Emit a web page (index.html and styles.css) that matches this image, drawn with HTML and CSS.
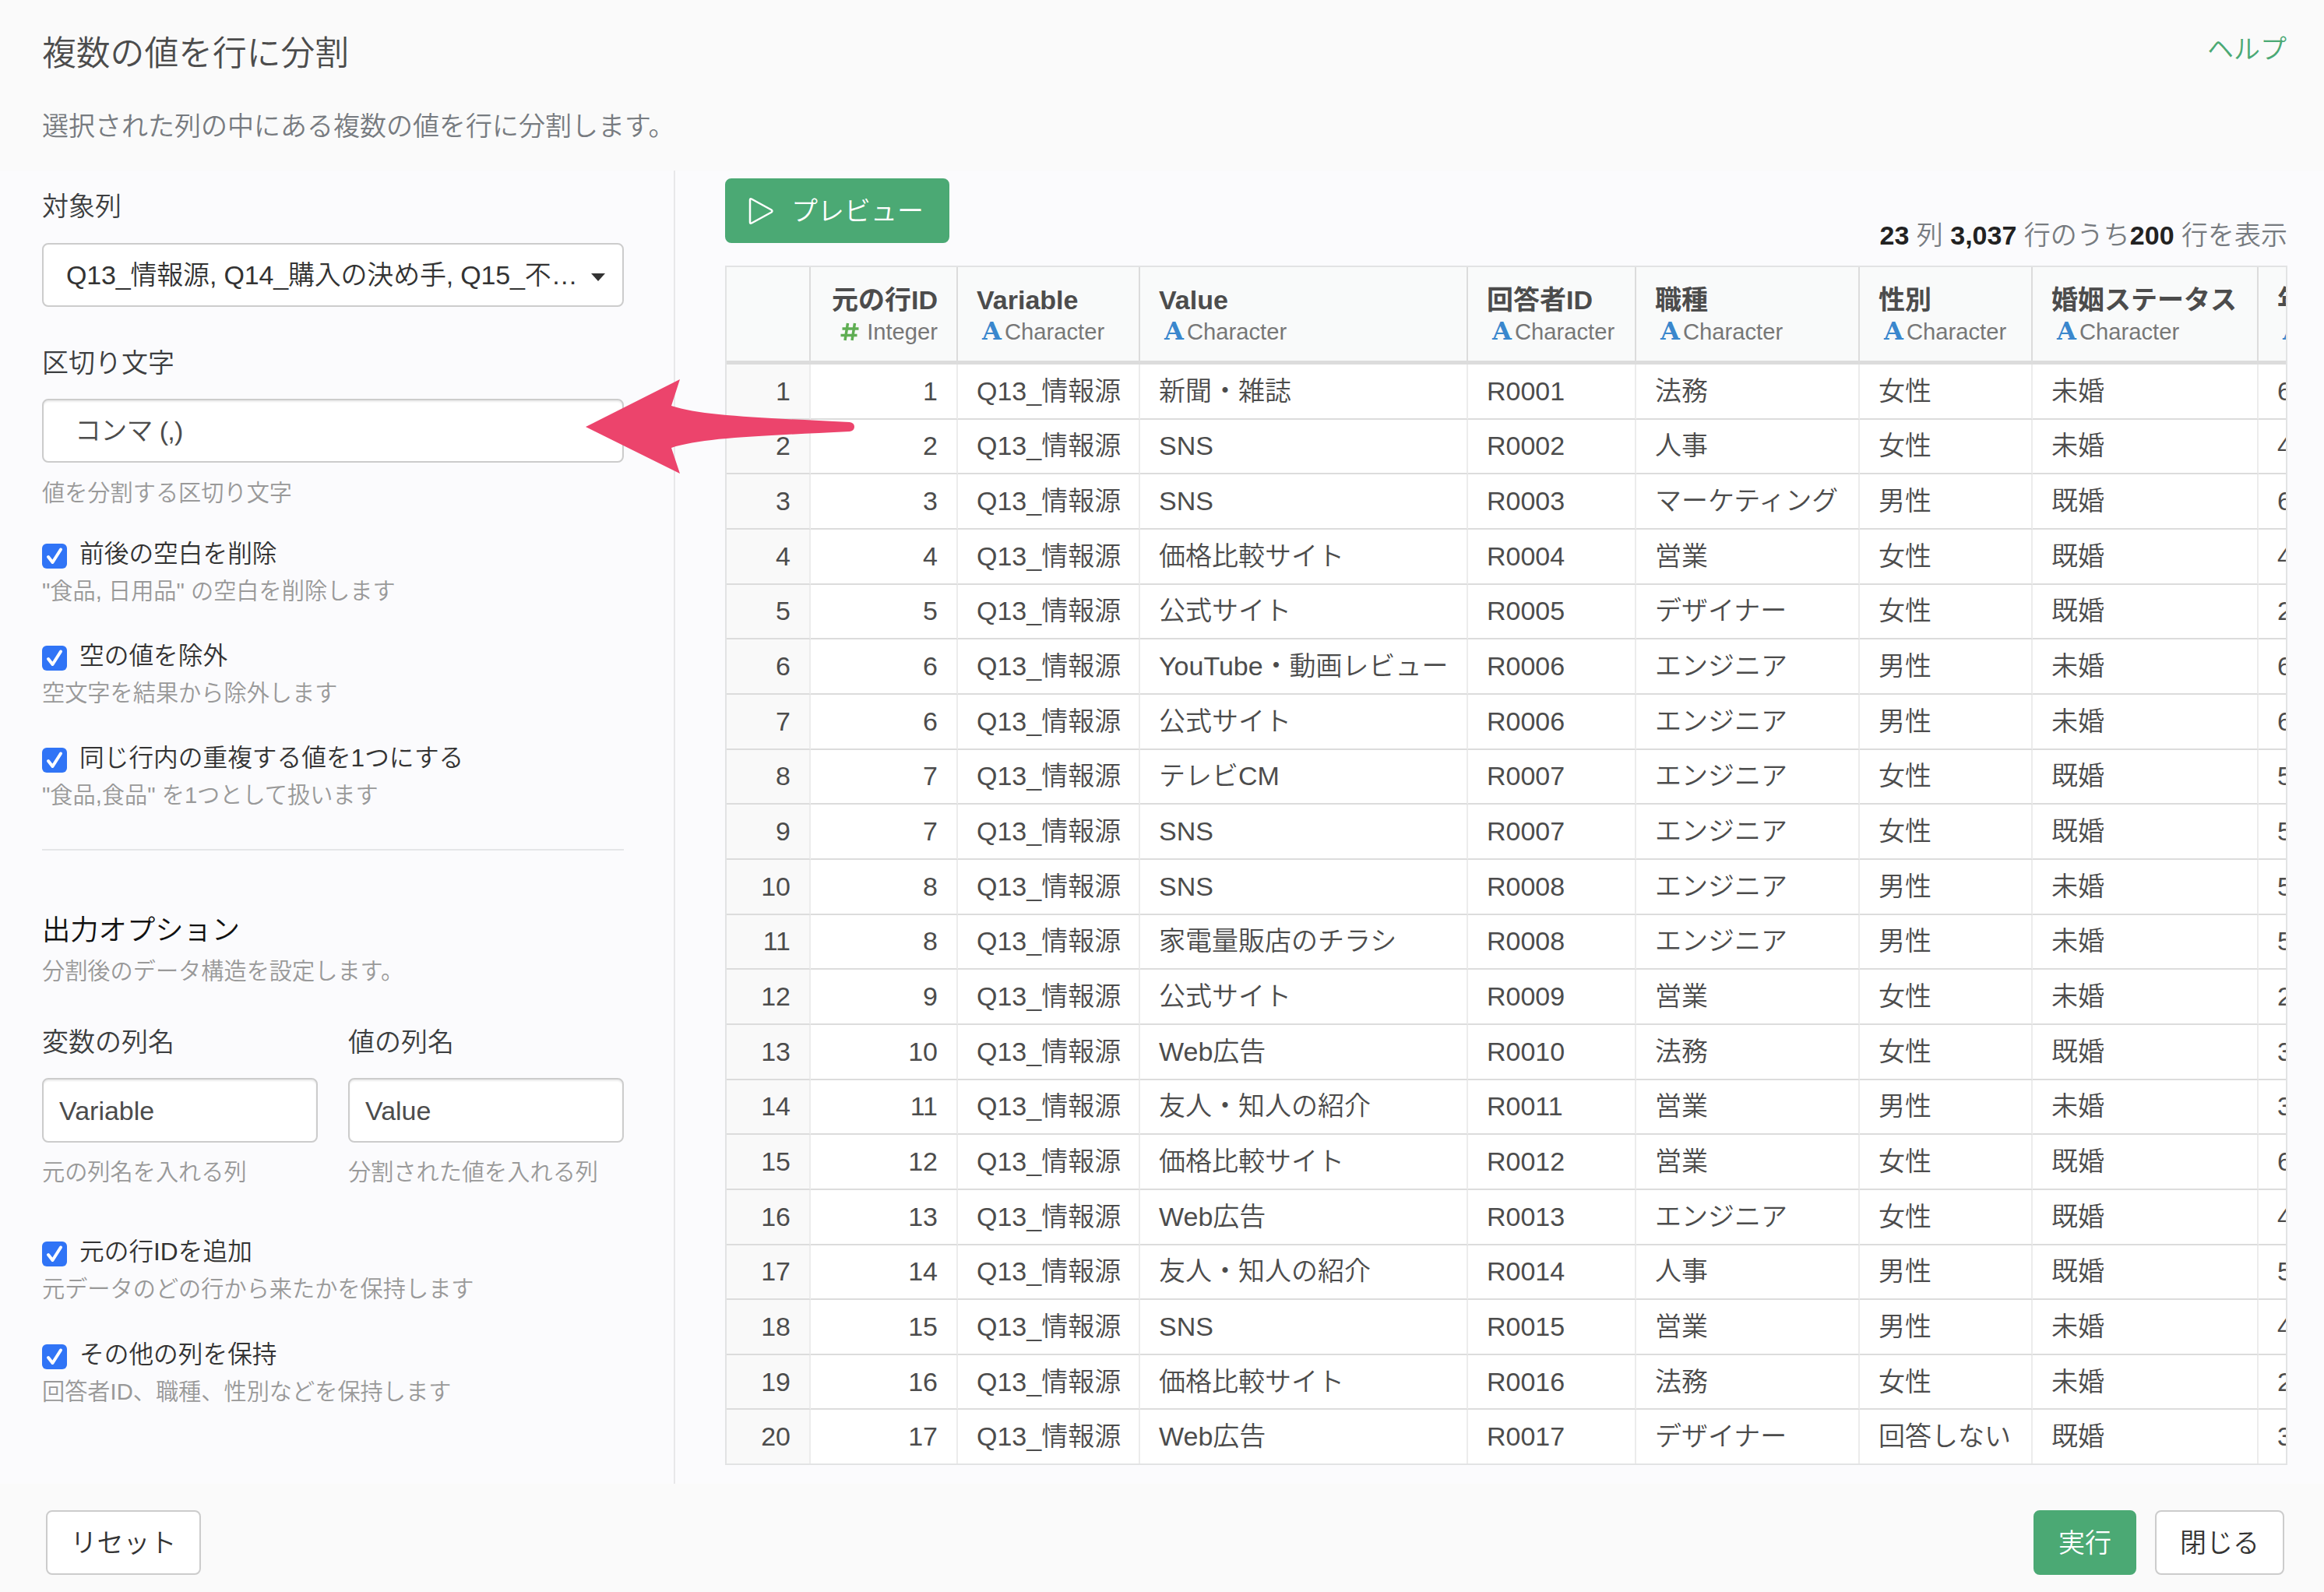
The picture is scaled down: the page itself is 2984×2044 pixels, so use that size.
FILE: index.html
```html
<!DOCTYPE html>
<html lang="ja">
    <head>
        <meta charset="UTF-8">
        <title>複数の値を行に分割</title>
        <link rel="stylesheet" href="styles.css">
    </head>
    <body>
        <div class="dialog">
            <header>
                <div>
                    <h1>複数の値を行に分割</h1>
                    <p>選択された列の中にある複数の値を行に分割します。</p>
                </div>
                <a class="help-link">ヘルプ</a>
            </header>
            <main>
                <div class="sidebar">
                    <div class="label">対象列</div>
                    <div class="select"><span>Q13_情報源, Q14_購入の決め手, Q15_不…</span><i class="caret"></i></div>
                    <div class="label second">区切り文字</div>
                    <div class="input comma">コンマ (,)</div>
                    <div class="hint">値を分割する区切り文字</div>
                    <div class="checks">
                        <div class="check">
                            <div class="check-label"><svg class="box" viewBox="0 0 32 32"><rect width="32" height="32" rx="6"/><path d="M8 17l5.500 7L24 7.500"/></svg>前後の空白を削除</div>
                            <div class="hint">"食品, 日用品" の空白を削除します</div>
                        </div>
                        <div class="check">
                            <div class="check-label"><svg class="box" viewBox="0 0 32 32"><rect width="32" height="32" rx="6"/><path d="M8 17l5.500 7L24 7.500"/></svg>空の値を除外</div>
                            <div class="hint">空文字を結果から除外します</div>
                        </div>
                        <div class="check">
                            <div class="check-label"><svg class="box" viewBox="0 0 32 32"><rect width="32" height="32" rx="6"/><path d="M8 17l5.500 7L24 7.500"/></svg>同じ行内の重複する値を1つにする</div>
                            <div class="hint">"食品,食品" を1つとして扱います</div>
                        </div>
                    </div>
                    <hr>
                    <h2>出力オプション</h2>
                    <div class="hint">分割後のデータ構造を設定します。</div>
                    <div class="columns">
                        <div>
                            <div class="label">変数の列名</div>
                            <div class="input">Variable</div>
                            <div class="hint">元の列名を入れる列</div>
                        </div>
                        <div>
                            <div class="label">値の列名</div>
                            <div class="input">Value</div>
                            <div class="hint">分割された値を入れる列</div>
                        </div>
                    </div>
                    <div class="checks output">
                        <div class="check">
                            <div class="check-label"><svg class="box" viewBox="0 0 32 32"><rect width="32" height="32" rx="6"/><path d="M8 17l5.500 7L24 7.500"/></svg>元の行IDを追加</div>
                            <div class="hint">元データのどの行から来たかを保持します</div>
                        </div>
                        <div class="check">
                            <div class="check-label"><svg class="box" viewBox="0 0 32 32"><rect width="32" height="32" rx="6"/><path d="M8 17l5.500 7L24 7.500"/></svg>その他の列を保持</div>
                            <div class="hint">回答者ID、職種、性別などを保持します</div>
                        </div>
                    </div>
                </div>
                <div class="preview">
                    <div class="toolbar">
                        <div class="btn green run-preview"><svg class="play" viewBox="0 0 32 36"><path d="M2 3.500v29q0 2 2 1L29.500 19.500q2-1.500 0-3L4 2.500q-2-1-2 1z"/></svg>プレビュー</div>
                        <div class="count"><b>23</b> 列 <b>3,037</b> 行のうち<b>200</b> 行を表示</div>
                    </div>
                    <div class="table-wrap">
                        <table>
                            <colgroup><col class="c0"><col class="c1"><col class="c2"><col class="c3"><col class="c4"><col class="c5"><col class="c6"><col class="c7"><col class="c8"></colgroup>
                            <thead>
                                <tr>
                                    <th></th>
                                    <th>元の行ID<div class="type"><svg class="hash" viewBox="0 0 24 24"><path d="M9.500 1L6 23M18.500 1L15 23M2.500 8h21M.5 16.500h21"/></svg>Integer</div></th>
                                    <th>Variable<div class="type"><i>A</i>Character</div></th>
                                    <th>Value<div class="type"><i>A</i>Character</div></th>
                                    <th>回答者ID<div class="type"><i>A</i>Character</div></th>
                                    <th>職種<div class="type"><i>A</i>Character</div></th>
                                    <th>性別<div class="type"><i>A</i>Character</div></th>
                                    <th>婚姻ステータス<div class="type"><i>A</i>Character</div></th>
                                    <th>年代<div class="type"><i>A</i>Character</div></th>
                                </tr>
                            </thead>
                            <tbody>
                                <tr><td>1</td><td>1</td><td>Q13_情報源</td><td>新聞・雑誌</td><td>R0001</td><td>法務</td><td>女性</td><td>未婚</td><td>60</td></tr>
                                <tr><td>2</td><td>2</td><td>Q13_情報源</td><td>SNS</td><td>R0002</td><td>人事</td><td>女性</td><td>未婚</td><td>40</td></tr>
                                <tr><td>3</td><td>3</td><td>Q13_情報源</td><td>SNS</td><td>R0003</td><td>マーケティング</td><td>男性</td><td>既婚</td><td>60</td></tr>
                                <tr><td>4</td><td>4</td><td>Q13_情報源</td><td>価格比較サイト</td><td>R0004</td><td>営業</td><td>女性</td><td>既婚</td><td>40</td></tr>
                                <tr><td>5</td><td>5</td><td>Q13_情報源</td><td>公式サイト</td><td>R0005</td><td>デザイナー</td><td>女性</td><td>既婚</td><td>20</td></tr>
                                <tr><td>6</td><td>6</td><td>Q13_情報源</td><td>YouTube・動画レビュー</td><td>R0006</td><td>エンジニア</td><td>男性</td><td>未婚</td><td>60</td></tr>
                                <tr><td>7</td><td>6</td><td>Q13_情報源</td><td>公式サイト</td><td>R0006</td><td>エンジニア</td><td>男性</td><td>未婚</td><td>60</td></tr>
                                <tr><td>8</td><td>7</td><td>Q13_情報源</td><td>テレビCM</td><td>R0007</td><td>エンジニア</td><td>女性</td><td>既婚</td><td>50</td></tr>
                                <tr><td>9</td><td>7</td><td>Q13_情報源</td><td>SNS</td><td>R0007</td><td>エンジニア</td><td>女性</td><td>既婚</td><td>50</td></tr>
                                <tr><td>10</td><td>8</td><td>Q13_情報源</td><td>SNS</td><td>R0008</td><td>エンジニア</td><td>男性</td><td>未婚</td><td>50</td></tr>
                                <tr><td>11</td><td>8</td><td>Q13_情報源</td><td>家電量販店のチラシ</td><td>R0008</td><td>エンジニア</td><td>男性</td><td>未婚</td><td>50</td></tr>
                                <tr><td>12</td><td>9</td><td>Q13_情報源</td><td>公式サイト</td><td>R0009</td><td>営業</td><td>女性</td><td>未婚</td><td>20</td></tr>
                                <tr><td>13</td><td>10</td><td>Q13_情報源</td><td>Web広告</td><td>R0010</td><td>法務</td><td>女性</td><td>既婚</td><td>30</td></tr>
                                <tr><td>14</td><td>11</td><td>Q13_情報源</td><td>友人・知人の紹介</td><td>R0011</td><td>営業</td><td>男性</td><td>未婚</td><td>30</td></tr>
                                <tr><td>15</td><td>12</td><td>Q13_情報源</td><td>価格比較サイト</td><td>R0012</td><td>営業</td><td>女性</td><td>既婚</td><td>60</td></tr>
                                <tr><td>16</td><td>13</td><td>Q13_情報源</td><td>Web広告</td><td>R0013</td><td>エンジニア</td><td>女性</td><td>既婚</td><td>40</td></tr>
                                <tr><td>17</td><td>14</td><td>Q13_情報源</td><td>友人・知人の紹介</td><td>R0014</td><td>人事</td><td>男性</td><td>既婚</td><td>50</td></tr>
                                <tr><td>18</td><td>15</td><td>Q13_情報源</td><td>SNS</td><td>R0015</td><td>営業</td><td>男性</td><td>未婚</td><td>40</td></tr>
                                <tr><td>19</td><td>16</td><td>Q13_情報源</td><td>価格比較サイト</td><td>R0016</td><td>法務</td><td>女性</td><td>未婚</td><td>20</td></tr>
                                <tr><td>20</td><td>17</td><td>Q13_情報源</td><td>Web広告</td><td>R0017</td><td>デザイナー</td><td>回答しない</td><td>既婚</td><td>30</td></tr>
                            </tbody>
                        </table>
                    </div>
                </div>
            </main>
            <footer>
                <div class="btn reset">リセット</div>
                <div class="btn green run">実行</div>
                <div class="btn close">閉じる</div>
            </footer>
            <!-- callout arrow over the delimiter field -->
            <svg class="arrow" viewBox="0 0 348 122"><path d="M0 61L121 0L110 34C150 47 220 49 339 55Q345 56 345 61Q345 66 339 67C220 73 150 75 110 88L121 121Z"/></svg>
        </div>
    </body>
</html>
```
FILE: styles.css
```css
* {
    box-sizing: border-box;
}

body {
    margin: 0;
    font-family: "Liberation Sans", "Noto Sans CJK JP", sans-serif;
    font-size: 34px;
    font-weight: 350;
    line-height: 40px;
    color: #4c4c4c;
}

b {
    font-weight: bold;
}

.dialog {
    position: relative;
    width: 2984px;
    height: 2044px;
    display: flex;
    flex-direction: column;
    overflow: hidden;
    background-color: #fafafa;
}

header {
    height: 219px;
    padding: 43px 48px 0 54px;
    display: flex;
    justify-content: space-between;
}

h1 {
    margin: 0;
    padding-top: 1px;
    font-size: 43.800px;
    line-height: 50px;
    font-weight: 350;
}

header p {
    margin: 48px 0 0;
    color: #777b80;
}

.help-link {
    color: #4ba974;
}

main {
    height: 1686px;
    display: flex;
    background-color: #fbfbfd;
}

.sidebar {
    width: 867px;
    padding: 26px 64px 0 54px;
    border-right: 2px solid #e8e8ea;
    color: #333;
}

.label {
    margin-bottom: 27px;
    color: #3c3e40;
}

.label.second {
    margin: 52px 0 26px;
}

.select,
.input {
    height: 82px;
    padding: 0 20px;
    display: flex;
    align-items: center;
    background-color: white;
    border: 2px solid #ccc;
    border-radius: 8px;
    white-space: nowrap;
}

.select {
    padding: 0 22px 0 29px;
    justify-content: space-between;
    letter-spacing: -0.180px;
}

.input {
    color: #4c4c4c;
    box-shadow: inset 0 2px 2px rgba(0, 0, 0, 0.08);
}

.comma {
    padding-left: 40px;
    margin-bottom: 22px;
    letter-spacing: -0.700px;
}

.caret {
    margin-top: 6px;
    border: 9px solid transparent;
    border-top: 10px solid #333;
    border-bottom: 0;
}

.hint {
    font-size: 29.200px;
    line-height: 34px;
    color: #999;
    white-space: nowrap;
}

.checks {
    margin-top: 41px;
    display: flex;
    flex-direction: column;
    gap: 46px;
}

.checks.output {
    margin-top: 65px;
    gap: 47px;
}

.check-label {
    display: flex;
    font-size: 31.700px;
    margin-bottom: 11px;
}

.box {
    width: 32px;
    height: 32px;
    margin: 7px 16px 0 0;
}

.box rect {
    fill: #3074f6;
}

.box path {
    fill: none;
    stroke: white;
    stroke-width: 4;
    stroke-linecap: round;
    stroke-linejoin: round;
}

hr {
    height: 2px;
    margin: 52px 0 83px;
    border: 0;
    background-color: #e5e6e8;
}

h2 {
    margin: 0 0 15px;
    font-size: 36.300px;
    font-weight: 350;
    color: #111;
}

.columns {
    margin-top: 54px;
    display: grid;
    grid-template-columns: 1fr 1fr;
    gap: 39px;
}

.columns .label {
    margin-bottom: 26px;
}

.columns .input {
    height: 83px;
    margin-bottom: 21px;
}

.preview {
    width: 2070px;
    padding: 10px 0 0 64px;
}

.toolbar {
    display: flex;
    justify-content: space-between;
    height: 112px;
}

.btn {
    height: 83px;
    display: flex;
    align-items: center;
    justify-content: center;
    background-color: white;
    border: 2px solid #ccc;
    border-radius: 8px;
    color: #333;
}

.btn.green {
    background-color: #4ba974;
    border-color: #4ba974;
    color: white;
}

.run-preview {
    width: 288px;
    justify-content: flex-start;
    padding-left: 28px;
}

.play {
    width: 32px;
    height: 36px;
    margin-right: 23px;
    fill: none;
    stroke: white;
    stroke-width: 2.500;
}

.count {
    padding-top: 53px;
    color: #777b80;
}

.count b {
    color: #222;
}

.table-wrap {
    width: 2006px;
    height: 1540px;
    overflow: hidden;
    border: 2px solid #e2e3e4;
    background-color: white;
}

table {
    width: 2111px;
    table-layout: fixed;
    border-collapse: separate;
    border-spacing: 0;
}

.c0 { width: 108px; }
.c1 { width: 189px; }
.c2 { width: 234px; }
.c3 { width: 421px; }
.c4 { width: 216px; }
.c5 { width: 287px; }
.c6 { width: 222px; }
.c7 { width: 290px; }
.c8 { width: 144px; }

th,
td {
    padding: 0 24px 1px;
    text-align: left;
    white-space: nowrap;
    border-right: 2px solid #ececec;
}

th {
    height: 125px;
    padding: 5px 24px 0;
    background-color: #f9fafa;
    border-right-color: #dcdcdc;
    border-bottom: 5px solid #dcdcdc;
}

td {
    height: 70.670px;
    border-bottom: 2px solid #dcdcdc;
}

td:first-child {
    background-color: #f9f9f9;
}

th:nth-child(2),
td:nth-child(-n+2) {
    text-align: right;
}

.type {
    font-size: 29.200px;
    font-weight: 350;
    line-height: 42px;
    color: #777;
}

.type i {
    display: inline-block;
    width: 27px;
    margin: 0 2px 0 7px;
    font: bold 32px "DejaVu Serif", serif;
    line-height: 36px;
    color: #3a87cd;
}

.hash {
    width: 24px;
    height: 24px;
    margin-right: 10px;
    vertical-align: -2px;
    fill: none;
    stroke: #5fae53;
    stroke-width: 3.500;
}

footer {
    padding: 34px 51px 0 59px;
    display: flex;
}

.reset {
    width: 199px;
    margin-right: auto;
}

.run {
    width: 132px;
    margin-right: 24px;
}

.close {
    width: 166px;
}

.arrow {
    position: absolute;
    left: 752px;
    top: 487px;
    width: 348px;
    height: 122px;
    fill: #ec446c;
}
```
